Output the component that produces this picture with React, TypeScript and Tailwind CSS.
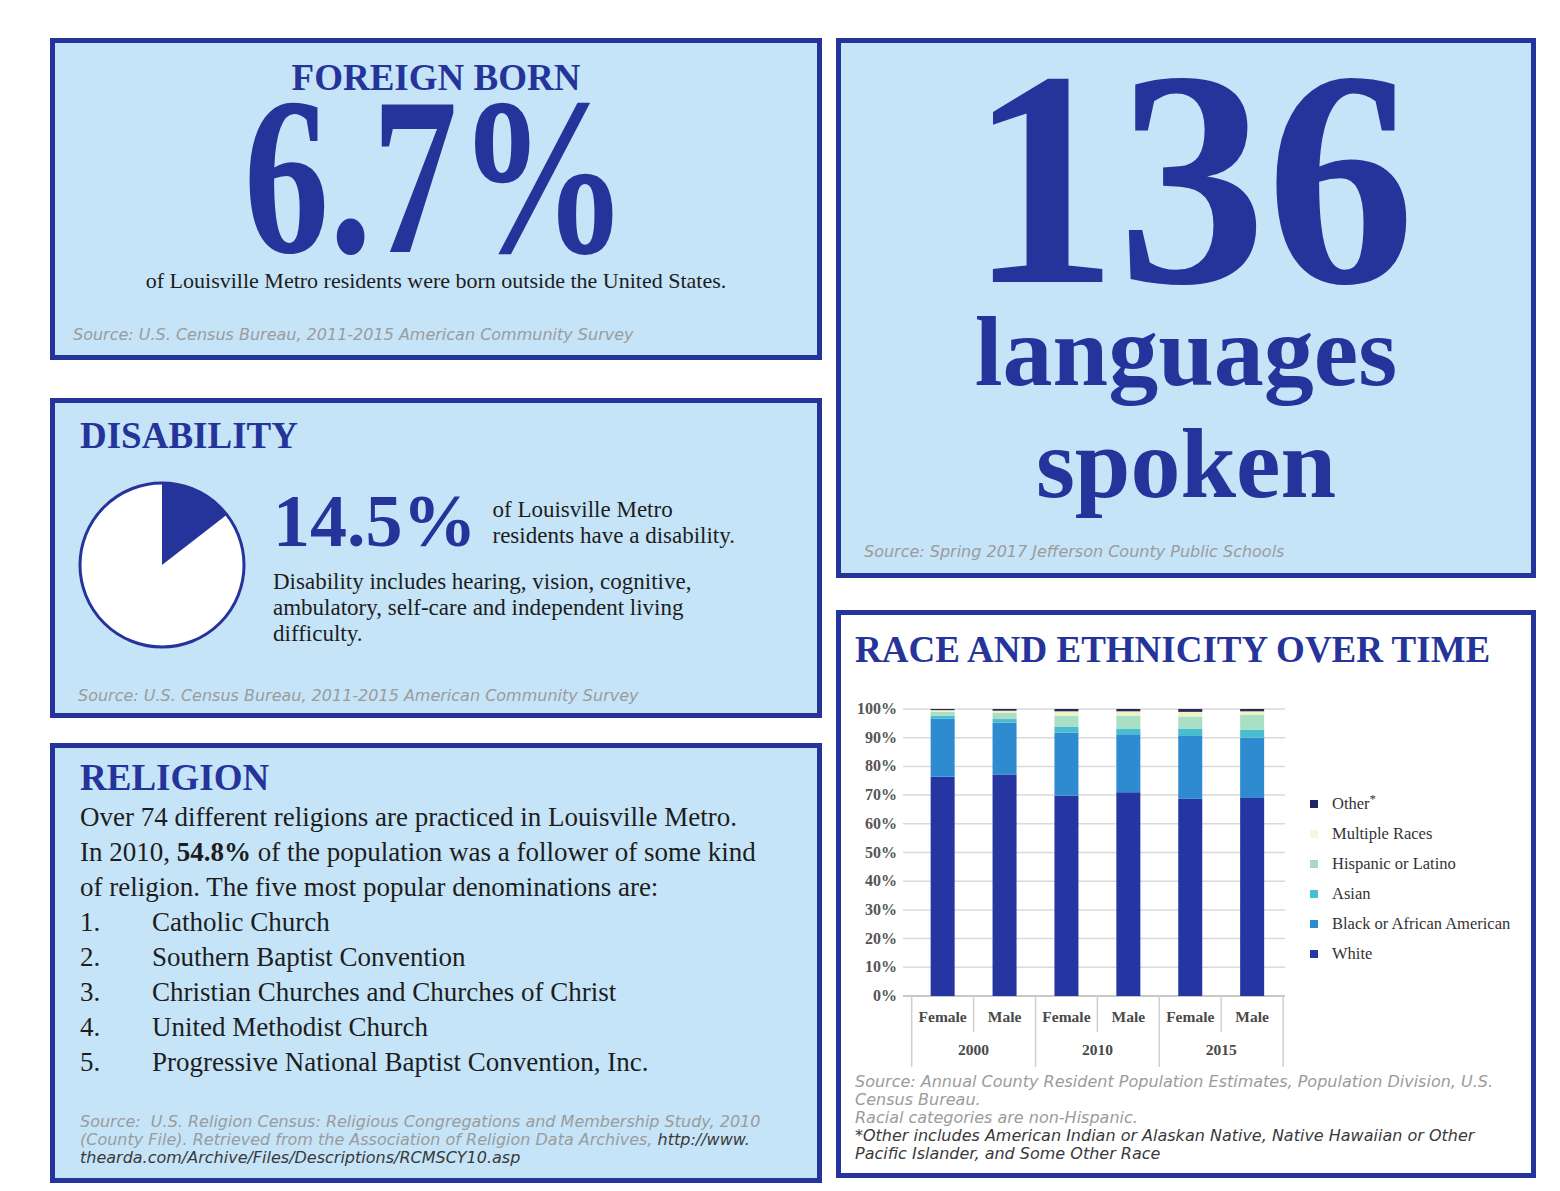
import React from 'react';

const NAVY = '#25349b';

// stacked bar data: white, black, asian, hispanic, multiple, other (cumulative tops in %)
const bars = [
  [76.4, 96.7, 97.7, 99.0, 99.6, 100],
  [77.2, 95.3, 96.5, 98.6, 99.4, 100],
  [69.8, 91.8, 93.9, 97.7, 99.2, 100],
  [71.0, 91.2, 93.2, 97.7, 99.2, 100],
  [68.7, 90.6, 93.2, 97.4, 99.0, 100],
  [69.0, 90.0, 92.7, 97.9, 99.2, 100],
];
const segColors = ['#2536a3', '#2f8bcf', '#48bdd0', '#a9dfc4', '#eef3c6', '#2a2a55'];

const legend = [
  { label: 'Other', color: '#1f2466', star: true },
  { label: 'Multiple Races', color: '#f6f8d8' },
  { label: 'Hispanic or Latino', color: '#a9d8c4' },
  { label: 'Asian', color: '#48bdd0' },
  { label: 'Black or African American', color: '#2f8bcf' },
  { label: 'White', color: '#2536a3' },
];

function Pie() {
  return (
    <svg width="170" height="170" viewBox="0 0 170 170" className="shrink-0">
      <circle cx="85" cy="85" r="82" fill="#ffffff" stroke={NAVY} strokeWidth="3" />
      <path d="M85 85 L85 3 A82 82 0 0 1 149.8 34.7 Z" fill={NAVY} />
    </svg>
  );
}

function RaceChart() {
  const y = (p: number) => 298 - 2.87 * p;
  const slotLeft = 63.7;
  const slotW = 61.9;
  const ticks = [0, 10, 20, 30, 40, 50, 60, 70, 80, 90, 100];
  return (
    <svg width="445" height="372" viewBox="0 0 445 372" className="shrink-0">
      {ticks.map((t) => (
        <g key={t}>
          <line x1="55" x2="437" y1={y(t)} y2={y(t)} stroke={t === 0 ? '#b5b5b5' : '#dadada'} strokeWidth="1.5" />
          <text
            x="49"
            y={y(t) + 5}
            textAnchor="end"
            fontSize="16"
            fontWeight="bold"
            fill="#555"
            fontFamily="Liberation Serif, serif"
          >
            {t}%
          </text>
        </g>
      ))}
      {bars.map((b, i) => {
        const cx = slotLeft + slotW / 2 + i * slotW;
        let prev = 0;
        return (
          <g key={i}>
            {b.map((top, j) => {
              const r = (
                <rect key={j} x={cx - 12} width="24" y={y(top)} height={y(prev) - y(top)} fill={segColors[j]} />
              );
              prev = top;
              return r;
            })}
            <text
              x={cx}
              y="324"
              textAnchor="middle"
              fontSize="15.5"
              fontWeight="bold"
              fill="#4a4a4a"
              fontFamily="Liberation Serif, serif"
            >
              {i % 2 === 0 ? 'Female' : 'Male'}
            </text>
          </g>
        );
      })}
      {[0, 1, 2, 3, 4, 5, 6].map((k) => (
        <line
          key={k}
          x1={slotLeft + k * slotW}
          x2={slotLeft + k * slotW}
          y1="298"
          y2={k % 2 === 0 ? 369 : 334}
          stroke="#cfcfcf"
          strokeWidth="1.5"
        />
      ))}
      {['2000', '2010', '2015'].map((yr, k) => (
        <text
          key={yr}
          x={slotLeft + slotW + k * 2 * slotW}
          y="357"
          textAnchor="middle"
          fontSize="15.5"
          fontWeight="bold"
          fill="#4a4a4a"
          fontFamily="Liberation Serif, serif"
        >
          {yr}
        </text>
      ))}
    </svg>
  );
}

export default function App() {
  const box = 'border-[5px] border-[#24349a] bg-[#c5e4f8]';
  const heading = "text-[37px] leading-none font-bold text-[#25349b] font-['Liberation_Serif',serif]";
  const source = "text-[16px] italic text-[#9b9b9b] font-['DejaVu_Sans',sans-serif] whitespace-nowrap";

  return (
    <div className="w-[1560px] h-[1191px] bg-white flex gap-[14px] pl-[50px] pt-[38px] font-['Liberation_Serif',serif] text-[#1d1d1d]">
      {/* Left column */}
      <div className="w-[772px] flex flex-col">
        {/* Foreign born */}
        <div className={`${box} h-[322px] flex flex-col items-center`}>
          <h2 className={`${heading} mt-[16px]`}>FOREIGN BORN</h2>
          <div className="text-[225px] leading-[160px] font-bold text-[#25349b] scale-x-[0.76]">6.7%</div>
          <p className="mt-[14px] text-[22px] leading-none">
            of Louisville Metro residents were born outside the United States.
          </p>
          <p className={`${source} leading-none self-start ml-[18px] mt-[35px]`}>
            Source: U.S. Census Bureau, 2011-2015 American Community Survey
          </p>
        </div>

        {/* Disability */}
        <div className={`${box} h-[320px] mt-[38px] flex flex-col pl-[22px]`}>
          <h2 className={`${heading} mt-[14px] ml-[3px]`}>DISABILITY</h2>
          <div className="flex items-start mt-[26px]">
            <Pie />
            <div className="ml-[26px] flex flex-col">
              <div className="flex items-start gap-[16px]">
                <div className="mt-[4px] text-[74px] leading-none font-bold text-[#25349b]">14.5%</div>
                <p className="mt-[17px] text-[23px] leading-[26px]">
                  of Louisville Metro
                  <br />
                  residents have a disability.
                </p>
              </div>
              <p className="mt-[11px] text-[23px] leading-[26px]">
                Disability includes hearing, vision, cognitive,
                <br />
                ambulatory, self-care and independent living
                <br />
                difficulty.
              </p>
            </div>
          </div>
          <p className={`${source} leading-none mt-auto mb-[9px] ml-[1px]`}>
            Source: U.S. Census Bureau, 2011-2015 American Community Survey
          </p>
        </div>

        {/* Religion */}
        <div className={`${box} h-[440px] mt-[25px] flex flex-col pl-[25px]`}>
          <h2 className={`${heading} mt-[11px]`}>RELIGION</h2>
          <div className="mt-[4px] text-[27px] leading-[35px]">
            <p>Over 74 different religions are practiced in Louisville Metro.</p>
            <p>
              In 2010, <b>54.8%</b> of the population was a follower of some kind
            </p>
            <p>of religion. The five most popular denominations are:</p>
            <ol>
              {[
                'Catholic Church',
                'Southern Baptist Convention',
                'Christian Churches and Churches of Christ',
                'United Methodist Church',
                'Progressive National Baptist Convention, Inc.',
              ].map((d, i) => (
                <li key={d} className="flex">
                  <span className="w-[72px]">{i + 1}.</span>
                  <span>{d}</span>
                </li>
              ))}
            </ol>
          </div>
          <div className={`${source} leading-[18px] mt-[33px]`}>
            <div>Source:&nbsp; U.S. Religion Census: Religious Congregations and Membership Study, 2010</div>
            <div>
              (County File). Retrieved from the Association of Religion Data Archives,{' '}
              <span className="text-[#3a3a3a]">http://www.</span>
            </div>
            <div className="text-[#3a3a3a]">thearda.com/Archive/Files/Descriptions/RCMSCY10.asp</div>
          </div>
        </div>
      </div>

      {/* Right column */}
      <div className="w-[700px] flex flex-col">
        {/* Languages */}
        <div className={`${box} h-[540px] flex flex-col items-center`}>
          <div className="mt-[26px] ml-[12px] text-[308px] leading-[220px] font-bold text-[#25349b] scale-x-[0.965]">
            136
          </div>
          <div className="mt-[7px] text-[100px] leading-[112px] font-bold text-[#25349b] text-center">
            languages
            <br />
            spoken
          </div>
          <p className={`${source} leading-none self-start ml-[23px] mt-[24px]`}>
            Source: Spring 2017 Jefferson County Public Schools
          </p>
        </div>

        {/* Race and ethnicity */}
        <div className="border-[5px] border-[#24349a] bg-white h-[568px] mt-[32px] flex flex-col pl-[14px]">
          <h2 className={`${heading} mt-[16px]`}>RACE AND ETHNICITY OVER TIME</h2>
          <div className="flex mt-[30px] -ml-[7px]">
            <RaceChart />
            <ul className="ml-[17px] mt-[91px] text-[16.5px] leading-[30px] text-[#333]">
              {legend.map((l) => (
                <li key={l.label} className="flex items-center gap-[14px]">
                  <span className="w-[8px] h-[8px]" style={{ backgroundColor: l.color }} />
                  <span>
                    {l.label}
                    {l.star && <sup className="text-[13px]">*</sup>}
                  </span>
                </li>
              ))}
            </ul>
          </div>
          <div className={`${source} leading-[18px] mt-[3px]`}>
            <div>Source: Annual County Resident Population Estimates, Population Division, U.S.</div>
            <div>Census Bureau.</div>
            <div>Racial categories are non-Hispanic.</div>
            <div className="text-[#3a3a3a]">*Other includes American Indian or Alaskan Native, Native Hawaiian or Other</div>
            <div className="text-[#3a3a3a]">Pacific Islander, and Some Other Race</div>
          </div>
        </div>
      </div>
    </div>
  );
}
